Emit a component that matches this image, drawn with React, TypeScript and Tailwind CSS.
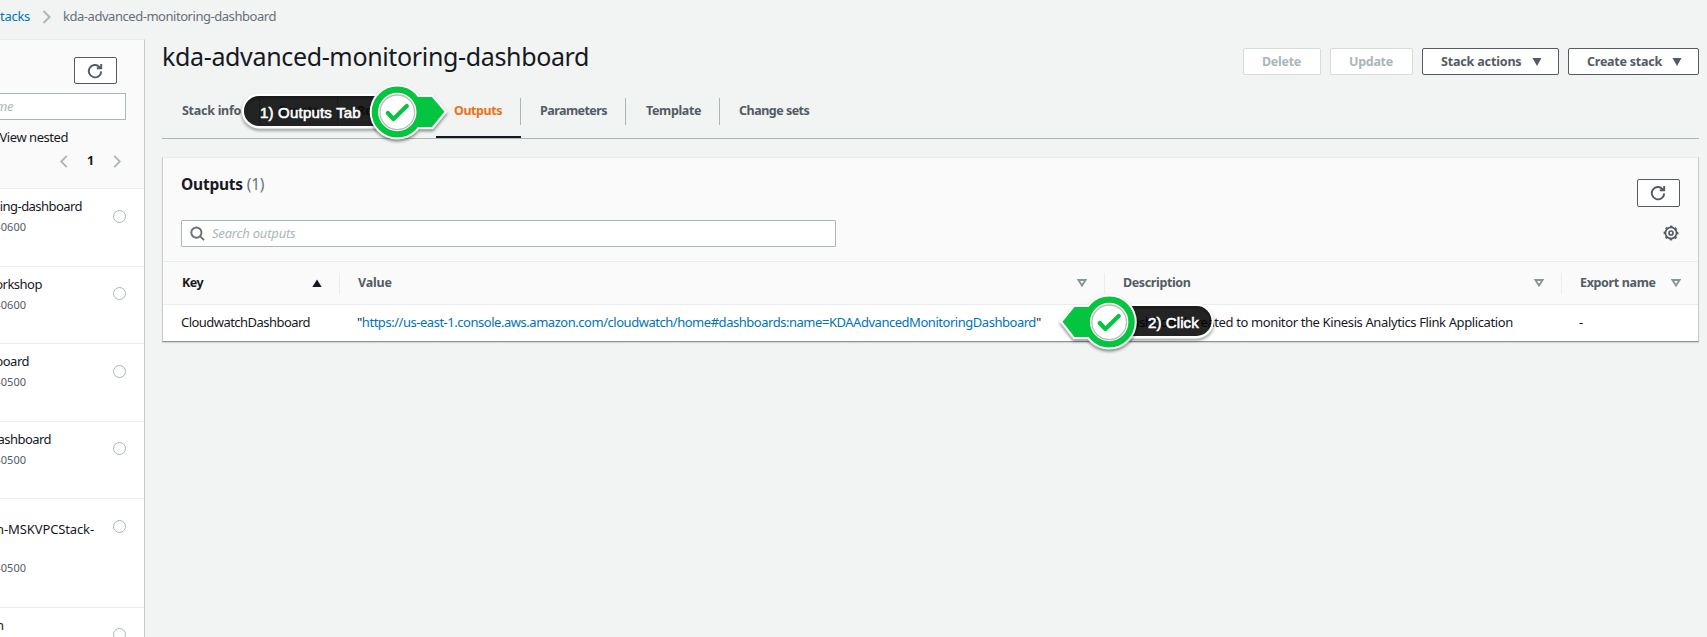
import type { ReactNode } from "react";

const stacks = [
  { name: "ing-dashboard", nameClass: "w-[82px] tracking-[-0.55px]", time: "-0600", rowClass: "h-[78px] pt-[7px]", gapClass: "mt-[1px]", dotClass: "mt-[14px]" },
  { name: "orkshop", nameClass: "w-[42px] tracking-[-0.5px]", time: "-0600", rowClass: "h-[77px] pt-[7px]", gapClass: "mt-[1px]", dotClass: "mt-[13px]" },
  { name: "board", nameClass: "w-[29px] tracking-[-0.5px]", time: "-0500", rowClass: "h-[78px] pt-[7px]", gapClass: "mt-[1px]", dotClass: "mt-[14px]" },
  { name: "ashboard", nameClass: "w-[51px] tracking-[-0.55px]", time: "-0500", rowClass: "h-[77px] pt-[7px]", gapClass: "mt-[1px]", dotClass: "mt-[13px]" },
  { name: "n-MSKVPCStack-", nameClass: "w-[94px] tracking-[-0.12px]", time: "-0500", rowClass: "h-[109px] pt-[20px]", gapClass: "mt-[19px]", dotClass: "mt-[1px]" },
  { name: "n", nameClass: "w-[4px]", time: "", rowClass: "h-[78px] pt-[7px]", gapClass: "mt-[1px]", dotClass: "mt-[13px]" },
];

const tabs = [
  { label: "Stack info", tabClass: "w-[98px] pl-[20px] tracking-[-0.27px]", divider: true },
  { label: "Events", tabClass: "w-[78px] pl-[19px] tracking-[-0.4px]", divider: true },
  { label: "Resources", tabClass: "w-[98px] pl-[19px] tracking-[-0.5px]", divider: false },
  { label: "Outputs", tabClass: "w-[85px] pl-[18px] tracking-[-0.45px]", divider: true, active: true },
  { label: "Parameters", tabClass: "w-[105px] pl-[19px] tracking-[-0.55px]", divider: true },
  { label: "Template", tabClass: "w-[94px] pl-[20px] tracking-[-0.35px]", divider: true },
  { label: "Change sets", tabClass: "w-[110px] pl-[19px] tracking-[-0.5px]", divider: false },
];

function RefreshIcon() {
  return (
    <svg className="-ml-[1px] size-4" viewBox="0 0 16 16" fill="none" stroke="#545b64" strokeWidth="1.9">
      <path d="M14.2 8.4A6.2 6.2 0 1 1 12.4 3.8L13.6 5" />
      <path d="M9.8 5.3H14.2V1" />
    </svg>
  );
}

function GearIcon() {
  return (
    <svg className="size-4" viewBox="0 0 16 16" fill="none" stroke="#545b64">
      <circle cx="8" cy="8" r="5.6" strokeWidth="1.7" />
      <circle cx="8" cy="8" r="6.7" strokeWidth="1.4" strokeDasharray="2.63 2.63" strokeDashoffset="1.3" />
      <circle cx="8" cy="8" r="2" strokeWidth="1.7" />
    </svg>
  );
}

function SortIcon() {
  return (
    <svg className="h-2 w-[10px] shrink-0" viewBox="0 0 10 8" fill="none" stroke="#879596" strokeWidth="1.8">
      <path d="M1.4 1H8.6L5 6.6Z" />
    </svg>
  );
}

function CaretDown() {
  return (
    <svg className="h-2 w-[10px]" viewBox="0 0 10 8" fill="#545b64">
      <path d="M0.5 0H9.5L5 8Z" />
    </svg>
  );
}

function Chevron({ className, left = false }: { className: string; left?: boolean }) {
  return (
    <svg className={className} viewBox="0 0 8 14" fill="none" stroke="#aab7b8" strokeWidth="2">
      <path d={left ? "M7 1L1 7L7 13" : "M1 1L7 7L1 13"} />
    </svg>
  );
}

function Button({ children, className }: { children: ReactNode; className: string }) {
  return (
    <button className={`flex items-center rounded-[2px] border bg-white text-[12.5px] font-bold ${className}`}>
      {children}
    </button>
  );
}

function Marker({ className, pill, outline, arrow, cx, children }: {
  className: string; pill: string; outline: string; arrow: string; cx: number; children: ReactNode;
}) {
  return (
    <div className={`absolute h-[64px] ${className}`}>
      <svg className="absolute inset-0 size-full overflow-visible">
        <g className="drop-shadow-[0_2px_1.5px_rgba(0,0,0,0.45)]">
          <path d={outline} fill="none" stroke="#fff" strokeWidth="2.4" />
        </g>
        <path d={pill} fill="#000" fillOpacity="0.86" />
        <g className="drop-shadow-[0_2px_1.5px_rgba(0,0,0,0.45)]">
          <path d={arrow} fill="#fff" stroke="#fff" strokeWidth="4.4" />
          <circle cx={cx} cy="32" r="27.6" fill="#fff" />
        </g>
        <path d={arrow} fill="#03c53f" />
        <circle cx={cx} cy="32" r="22.4" fill="#fff" stroke="#03c53f" strokeWidth="6.4" />
        <circle cx={cx} cy="32.3" r="17.3" fill="none" stroke="#bcbcbc" strokeWidth="1.3" />
        <path
          d={`M${cx - 9.5} 33L${cx - 3.8} 39L${cx + 9.5} 26`}
          fill="none" stroke="#03c53f" strokeWidth="4.2" strokeLinecap="round" strokeLinejoin="round"
        />
      </svg>
      {children}
    </div>
  );
}

export default function App() {
  return (
    <div className="relative flex h-[637px] w-[1707px] flex-col overflow-hidden bg-[#f2f3f3] font-['Noto_Sans',sans-serif] text-[13px] leading-5 text-[#16191f]">
      <nav className="flex h-[39px] shrink-0 items-start pt-[6px] whitespace-nowrap">
        <div className="flex w-[30px] justify-end tracking-[-0.3px] text-[#0073bb]">Stacks</div>
        <Chevron className="mt-[4px] ml-[12px] h-[14px] w-[9px]" />
        <div className="ml-[12px] tracking-[-0.46px] text-[#687078]">kda-advanced-monitoring-dashboard</div>
      </nav>

      <div className="flex min-h-0 flex-1">
        <aside className="w-[145px] shrink-0 overflow-hidden border-t border-r border-t-[#eaeded] border-r-[#c6cfcf] bg-white whitespace-nowrap">
          <div className="h-[149px] border-b border-[#eaeded] bg-[#fafafa]">
            <div className="flex justify-end pt-[17px] pr-[27px]">
              <Button className="h-[27px] w-[43px] justify-center border-[#545b64]"><RefreshIcon /></Button>
            </div>
            <div className="mt-[9px] flex h-[27px] w-[126px] items-center border-y border-r border-[#aab7b8] bg-white">
              <div className="-mt-[1px] flex w-[13px] justify-end tracking-[-0.4px] text-[#aab7b8] italic">name</div>
            </div>
            <div className="mt-[7px] flex w-[68px] justify-end tracking-[-0.45px]">View nested</div>
            <div className="mt-[4px] flex h-5 items-center pl-[60px]">
              <Chevron className="h-[13px] w-[8px]" left />
              <span className="w-[45px] text-center text-[12.5px] font-bold">1</span>
              <Chevron className="h-[13px] w-[8px]" />
            </div>
          </div>
          {stacks.map((s) => (
            <div key={s.name} className={`flex border-b border-[#eaeded] ${s.rowClass}`}>
              <div className="w-[113px] shrink-0">
                <div className={`flex justify-end ${s.nameClass}`}>{s.name}</div>
                <div className={`flex w-[26px] justify-end text-[11px] text-[#545b64] ${s.gapClass}`}>{s.time}</div>
              </div>
              <div className={`size-[13px] shrink-0 rounded-full border border-[#aab7b8] bg-white ${s.dotClass}`} />
            </div>
          ))}
        </aside>

        <main className="ml-[17px] flex w-[1537px] flex-col whitespace-nowrap">
          <div className="flex h-[50px] items-start justify-between">
            <h1 className="-mt-[1px] text-[25px] leading-9 tracking-[-0.35px]">kda-advanced-monitoring-dashboard</h1>
            <div className="flex pt-[9px]">
              <Button className="h-[27px] w-[78px] border-[#d5dbdb] pl-[18px] tracking-[-0.28px] text-[#aab7b8]">Delete</Button>
              <Button className="ml-[9px] h-[27px] w-[83px] border-[#d5dbdb] pl-[18px] tracking-[-0.28px] text-[#aab7b8]">Update</Button>
              <Button className="ml-[9px] h-[27px] w-[137px] gap-[11px] border-[#545b64] pl-[18px] tracking-[-0.16px] text-[#545b64]">Stack actions<CaretDown /></Button>
              <Button className="ml-[9px] h-[27px] w-[131px] gap-[10px] border-[#545b64] pl-[18px] tracking-[-0.24px] text-[#545b64]">Create stack<CaretDown /></Button>
            </div>
          </div>

          <div className="flex h-[50px] border-b border-[#aab7b8] text-[12.5px] font-bold text-[#545b64]">
            {tabs.map((t) => (
              <div key={t.label} className={`h-[49px] pt-[9px] ${t.active ? "border-b-2 border-[#16191f] text-[#ec7211]" : ""}`}>
                <div className={`flex h-[27px] items-center border-[#aab7b8] pb-[2px] ${t.divider ? "border-r" : ""} ${t.tabClass}`}>{t.label}</div>
              </div>
            ))}
          </div>

          <section className="mt-[18px] h-[185px] border border-t-[#eaeded] border-r-[#c6cfcf] border-b-[#879596] border-l-[#c6cfcf] bg-[#fafafa] shadow-[0_1px_1px_rgba(0,28,36,0.12)]">
            <div className="flex h-[62px] items-start justify-between pr-[18px] pl-[18px]">
              <h2 className="pt-[16px] text-[15.5px] leading-5 font-bold tracking-[-0.22px]">
                Outputs <span className="font-normal text-[#687078]">(1)</span>
              </h2>
              <Button className="mt-[21px] h-[28px] w-[43px] justify-center border-[#545b64]"><RefreshIcon /></Button>
            </div>
            <div className="flex h-[42px] items-start justify-between border-b border-[#eaeded] pr-[19px] pl-[18px]">
              <div className="flex h-[27px] w-[655px] items-center rounded-[1px] border border-[#aab7b8] bg-white pl-[8px]">
                <svg className="size-4" viewBox="0 0 16 16" fill="none" stroke="#687078" strokeWidth="1.9">
                  <circle cx="6.4" cy="6.6" r="5.1" />
                  <path d="M10 10.2L14 14.2" />
                </svg>
                <span className="-mt-[1px] ml-[6px] tracking-[-0.2px] text-[#aab7b8] italic">Search outputs</span>
              </div>
              <div className="mt-[5px]"><GearIcon /></div>
            </div>
            <div className="flex h-[43px] items-center border-b border-[#eaeded] text-[12.5px] font-bold text-[#545b64]">
              <div className="flex h-[21px] w-[177px] items-center justify-between border-r border-[#eaeded] pr-[17px] pl-[19px] tracking-[-0.5px] text-[#16191f]">
                Key
                <svg className="h-2 w-[10px]" viewBox="0 0 10 8" fill="#16191f"><path d="M0.3 8H9.7L5 0.5Z" /></svg>
              </div>
              <div className="flex h-[21px] w-[765px] items-center justify-between border-r border-[#eaeded] pr-[17px] pl-[18px] tracking-[-0.2px]">Value<SortIcon /></div>
              <div className="flex h-[21px] w-[457px] items-center justify-between border-r border-[#eaeded] pr-[17px] pl-[18px] tracking-[-0.38px]">Description<SortIcon /></div>
              <div className="flex flex-1 items-center justify-between pr-[17px] pl-[18px] tracking-[-0.35px]">Export name<SortIcon /></div>
            </div>
            <div className="flex h-[36px] items-center bg-white pb-[2px]">
              <div className="w-[177px] pl-[18px] tracking-[-0.54px]">CloudwatchDashboard</div>
              <div className="w-[765px] pl-[17px] tracking-[-0.468px]">
                "<a className="text-[#0073bb]">https://us-east-1.console.aws.amazon.com/cloudwatch/home#dashboards:name=KDAAdvancedMonitoringDashboard</a>"
              </div>
              <div className="w-[457px] pl-[18px] tracking-[-0.382px]">Dashboard created to monitor the Kinesis Analytics Flink Application</div>
              <div className="pl-[17px]">-</div>
            </div>
          </section>
        </main>
      </div>

      <Marker
        className="top-[80px] left-[240px] w-[210px]"
        cx={157.3}
        outline="M140 14.8H19A16.2 16.2 0 0 0 19 47.2H140"
        pill="M140 16H19A15 15 0 0 0 19 46H140Z"
        arrow="M157 17H192L204.5 31.8L192 47H157Z"
      >
        <span className="absolute top-[23px] left-[20px] font-['Liberation_Sans',sans-serif] text-[15px] leading-5 tracking-[0.2px] whitespace-nowrap text-white [-webkit-text-stroke:0.6px_white]">1) Outputs Tab</span>
      </Marker>
      <Marker
        className="top-[290px] left-[1060px] w-[156px]"
        cx={49.2}
        outline="M66 14.8H136.5A16.2 16.2 0 0 1 136.5 47.2H66"
        pill="M66 16H136.5A15 15 0 0 1 136.5 46H66Z"
        arrow="M49 17H14.5L2.5 31.8L14.5 47H49Z"
      >
        <span className="absolute top-[23px] left-[88px] font-['Liberation_Sans',sans-serif] text-[15px] leading-5 tracking-[0.1px] whitespace-nowrap text-white [-webkit-text-stroke:0.6px_white]">2) Click</span>
      </Marker>
    </div>
  );
}
